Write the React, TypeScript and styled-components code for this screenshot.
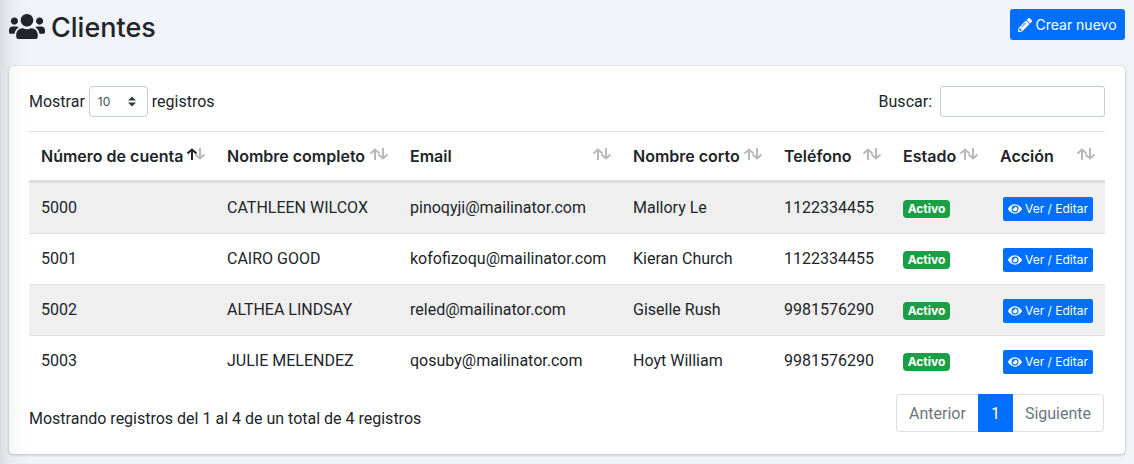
import React from "react";
import styled, { createGlobalStyle } from "styled-components";
import { FaUsers, FaPencilAlt, FaEye } from "react-icons/fa";

const GlobalStyle = createGlobalStyle`
  *, *::before, *::after { box-sizing: border-box; }
  body {
    margin: 0;
    background: #f0f3f7;
    color: #212529;
    font: 400 16px/24px Roboto, "Liberation Sans", sans-serif;
  }
  button, input, select { font-family: inherit; }
`;

const headingFont = `Inter, "Liberation Sans", sans-serif`;

const Page = styled.main`
  position: relative;
  min-height: 100vh;
  padding: 9px 9px 10px;

  &::before {
    content: "";
    position: absolute;
    inset: 0 auto 0 0;
    width: 28px;
    pointer-events: none;
    background: linear-gradient(to right, rgba(0, 0, 0, 0.09), rgba(0, 0, 0, 0.03) 40%, transparent);
  }
`;

const PageHeader = styled.header`
  display: flex;
  justify-content: space-between;
  align-items: flex-start;
  margin-bottom: 19px;
`;

const Title = styled.h1`
  display: flex;
  align-items: center;
  gap: 6px;
  margin: 0;
  font-family: ${headingFont};
  font-size: 27px;
  line-height: 38px;
  font-weight: 500;

  svg { width: 36px; height: 29px; margin-bottom: 4px; }
`;

const PrimaryButton = styled.button<{ $small?: boolean }>`
  display: inline-flex;
  align-items: center;
  justify-content: center;
  gap: 3px;
  height: ${(p) => (p.$small ? 24 : 31)}px;
  width: ${(p) => (p.$small ? "90px" : "115px")};
  padding: 0;
  border: 0;
  border-radius: ${(p) => (p.$small ? 2 : 3)}px;
  background: #006ffd;
  color: #fff;
  font-family: ${headingFont};
  font-size: ${(p) => (p.$small ? 12 : 14)}px;
  line-height: 20px;
  white-space: nowrap;
  cursor: pointer;
`;

const Card = styled.section`
  padding: 20px;
  border-radius: 4px;
  background: #fff;
  box-shadow: 0 0 1px rgba(0, 0, 0, 0.25), 0 1px 3px rgba(0, 0, 0, 0.2);
`;

const Toolbar = styled.div`
  display: flex;
  justify-content: space-between;
  margin-bottom: 14px;
`;

const Field = styled.label`
  display: flex;
  align-items: center;
  gap: 4px;
  line-height: 31px;
`;

const SelectBox = styled.span`
  position: relative;
  display: flex;

  svg {
    position: absolute;
    right: 12px;
    top: 10px;
    width: 8px;
    height: 11px;
    pointer-events: none;
  }
`;

const Select = styled.select`
  appearance: none;
  width: 59px;
  height: 31px;
  padding: 0 24px 0 8px;
  border: 1px solid #c3ccd5;
  border-radius: 4px;
  background: #fff;
  color: #495057;
  font-family: ${headingFont};
  font-size: 12px;
`;

const SearchInput = styled.input`
  width: 165px;
  height: 31px;
  margin-left: 4px;
  padding: 4px 8px;
  border: 1px solid #c3ccd5;
  border-radius: 3px;
  background: #fff;
  font-size: 14px;
`;

const Table = styled.table`
  width: 100%;
  table-layout: fixed;
  border-collapse: separate;
  border-spacing: 0;
  border-top: 1px solid #dbe0e5;
`;

const HeadCell = styled.th`
  padding: 12px 10px 12px 12px;
  border-bottom: 3px solid #d9dee3;
  text-align: left;
  font-family: ${headingFont};
  font-weight: 600;
  white-space: nowrap;
`;

const HeadContent = styled.div`
  display: flex;
  justify-content: space-between;
  height: 24px;
`;

const SortIcon = styled.svg`
  flex: none;
  width: 18px;
  height: 12px;
  margin-top: 4px;
  fill: none;
  stroke: #212529;
  stroke-width: 2;
`;

const BodyRow = styled.tr`
  &:nth-child(odd) { background: #efefef; }
  &:last-child td { border-bottom: 0; }
`;

const Cell = styled.td<{ $action?: boolean }>`
  height: 51px;
  padding: ${(p) => (p.$action ? 14 : 13)}px 12px 0;
  border-bottom: 1px solid #dbe0e5;
  text-align: ${(p) => (p.$action ? "right" : "left")};
  vertical-align: top;
  white-space: nowrap;
  line-height: ${(p) => (p.$action ? 0 : 24)}px;
`;

const Badge = styled.span`
  display: block;
  width: 47px;
  height: 18px;
  margin-top: 4px;
  border-radius: 4px;
  background: #1a9f47;
  color: #fff;
  font-family: ${headingFont};
  font-size: 12px;
  line-height: 18px;
  font-weight: 700;
  text-align: center;
`;

const Footer = styled.footer`
  display: flex;
  justify-content: space-between;
  align-items: flex-start;
  padding: 7px 1px 2px 0;
`;

const Info = styled.p`
  margin: 13px 0 0;
`;

const Pagination = styled.nav`
  display: flex;
  height: 38px;
`;

const PageButton = styled.button<{ $active?: boolean }>`
  padding: 0 12px;
  border: 1px solid ${(p) => (p.$active ? "#006ffd" : "#dbe0e5")};
  border-width: ${(p) => (p.$active ? "1px" : "1px 0")};
  background: ${(p) => (p.$active ? "#006ffd" : "#fff")};
  color: ${(p) => (p.$active ? "#fff" : "#6c757d")};
  font-size: 16px;
  cursor: pointer;

  &:first-child { border-left-width: 1px; border-radius: 4px 0 0 4px; }
  &:last-child { border-right-width: 1px; border-radius: 0 4px 4px 0; }
`;

const columns = [
  { label: "Número de cuenta", width: 186 },
  { label: "Nombre completo", width: 183 },
  { label: "Email", width: 223 },
  { label: "Nombre corto", width: 151 },
  { label: "Teléfono", width: 119 },
  { label: "Estado", width: 97 },
  { label: "Acción", width: 117 },
];

const Column = styled.col<{ $share: number }>`
  width: ${(p) => (p.$share / 1076) * 100}%;
`;

const clients = [
  ["5000", "CATHLEEN WILCOX", "pinoqyji@mailinator.com", "Mallory Le", "1122334455"],
  ["5001", "CAIRO GOOD", "kofofizoqu@mailinator.com", "Kieran Church", "1122334455"],
  ["5002", "ALTHEA LINDSAY", "reled@mailinator.com", "Giselle Rush", "9981576290"],
  ["5003", "JULIE MELENDEZ", "qosuby@mailinator.com", "Hoyt William", "9981576290"],
];

function SortArrows({ ascending }: { ascending: boolean }) {
  return (
    <SortIcon viewBox="0 0 18 12" aria-hidden="true">
      <path opacity="0.32" d="M13 0v10.5M8.5 6.5l4.5 4 4.5-4" />
      <path opacity={ascending ? 1 : 0.32} d="M5 12V1.5M.5 5.5l4.5-4 4.5 4" />
    </SortIcon>
  );
}

export default function App() {
  return (
    <>
      <GlobalStyle />
      <Page>
        <PageHeader>
          <Title><FaUsers aria-hidden="true" />Clientes</Title>
          <PrimaryButton type="button"><FaPencilAlt aria-hidden="true" />Crear nuevo</PrimaryButton>
        </PageHeader>
        <Card>
          <Toolbar>
            <Field>
              Mostrar
              <SelectBox>
                <Select defaultValue="10">
                  <option>10</option>
                  <option>25</option>
                  <option>50</option>
                  <option>100</option>
                </Select>
                <svg viewBox="0 0 4 5" aria-hidden="true"><path fill="#343a40" d="M2 0L0 2h4zm0 5L0 3h4z" /></svg>
              </SelectBox>
              registros
            </Field>
            <Field>Buscar:<SearchInput type="search" /></Field>
          </Toolbar>
          <Table>
            <colgroup>
              {columns.map((c) => <Column key={c.label} $share={c.width} />)}
            </colgroup>
            <thead>
              <tr>
                {columns.map((c, i) => (
                  <HeadCell key={c.label} scope="col" aria-sort={i === 0 ? "ascending" : "none"}>
                    <HeadContent>{c.label}<SortArrows ascending={i === 0} /></HeadContent>
                  </HeadCell>
                ))}
              </tr>
            </thead>
            <tbody>
              {clients.map((client) => (
                <BodyRow key={client[0]}>
                  {client.map((value, i) => <Cell key={i}>{value}</Cell>)}
                  <Cell><Badge>Activo</Badge></Cell>
                  <Cell $action>
                    <PrimaryButton type="button" $small><FaEye size={14} aria-hidden="true" />Ver / Editar</PrimaryButton>
                  </Cell>
                </BodyRow>
              ))}
            </tbody>
          </Table>
          <Footer>
            <Info>Mostrando registros del 1 al 4 de un total de 4 registros</Info>
            <Pagination aria-label="Paginación">
              <PageButton type="button">Anterior</PageButton>
              <PageButton type="button" $active aria-current="page">1</PageButton>
              <PageButton type="button">Siguiente</PageButton>
            </Pagination>
          </Footer>
        </Card>
      </Page>
    </>
  );
}
